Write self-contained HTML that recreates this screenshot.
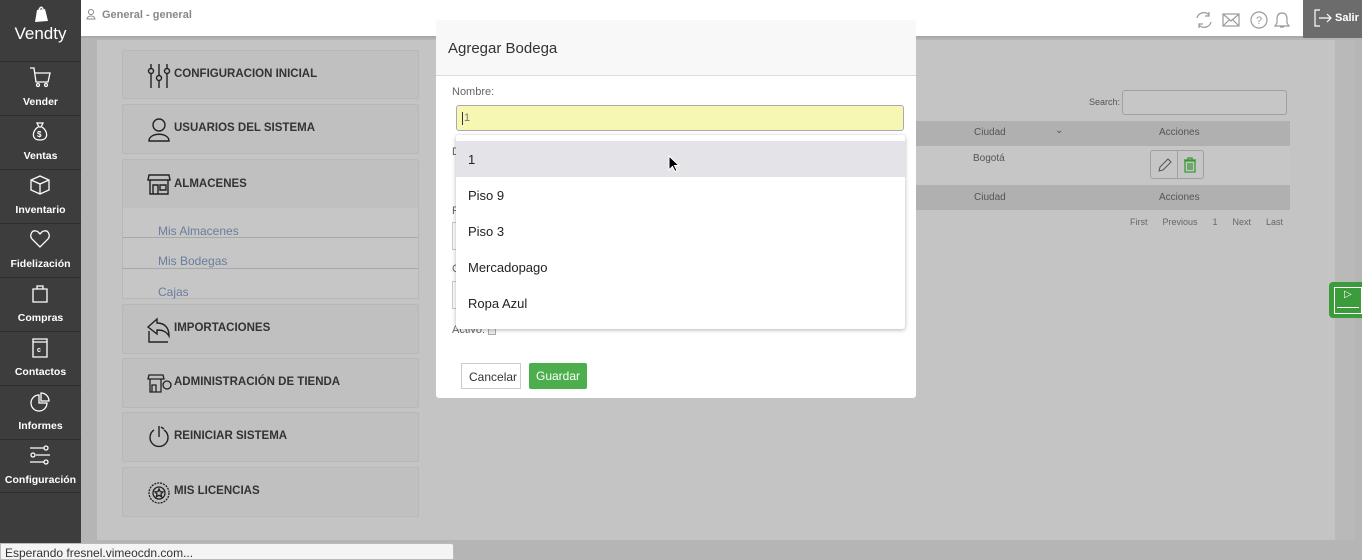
<!DOCTYPE html>
<html><head><meta charset="utf-8"><style>
*{box-sizing:border-box;margin:0;padding:0}
body{width:1362px;height:560px;overflow:hidden;font-family:"Liberation Sans",sans-serif;background:#b5b5b5;position:relative}
.abs{position:absolute}
#side{left:0;top:0;width:81px;height:560px;background:#3d3d3d}
.nav{position:absolute;left:0;width:81px;height:54px;border-top:1px solid #2e2e2e;color:#fff;font-size:10.5px;font-weight:bold;text-align:center}
.nav svg{position:absolute;left:29px;top:4px}
.nav span{position:absolute;left:0;right:0;top:34px}
#hdr{left:81px;top:0;width:1222px;height:38px;background:#fff;border-bottom:2px solid #a8a8a8}
#panel{left:97px;top:40px;width:1238px;height:500px;background:#c4c4c4}
.card{position:absolute;left:122px;width:297px;background:#c0c0c0;border:1px solid #b8b8b8;border-radius:2px;font-size:11.5px;font-weight:bold;color:#333}
.card b{position:absolute;left:51px;top:17px}
.card svg{position:absolute;left:24px;top:12px}
.sub{position:absolute;left:158px;font-size:12px;color:#6a7d9c}
#modal{left:436px;top:20px;width:480px;height:378px;background:#fff;border-radius:3px}
.item{position:absolute;left:0;width:449px;height:36px;font-size:13px;color:#222;padding:11px 12px}
.th{position:absolute;font-size:10px;color:#555}
</style></head><body>
<div id="side" class="abs">
 <svg class="abs" style="left:33px;top:5px" width="16" height="18" viewBox="0 0 16 18"><path d="M4 5 L12 4 L15 16 L2 17 Z" fill="#fff"/><path d="M6 5 Q8 0 10 4" stroke="#fff" fill="none" stroke-width="1.5"/></svg>
 <div class="abs" style="left:0;width:81px;top:24px;text-align:center;color:#fff;font-size:17px">Vendty</div>
 <div class="nav" style="top:61px"><svg width="22" height="24" viewBox="0 0 22 24" fill="none" stroke="#fff" stroke-width="1.3"><path d="M1 2h4l2 14h12l2-9H6"/><circle cx="9" cy="19" r="1.5"/><circle cx="17" cy="19" r="1.5"/></svg><span>Vender</span></div>
 <div class="nav" style="top:115px"><svg width="22" height="24" viewBox="0 0 22 24" fill="none" stroke="#fff" stroke-width="1.3"><path d="M8 3h6l-2 4h-2zM9 7C3 11 2 20 11 20S19 11 13 7"/><text x="8" y="17" font-size="8" fill="#fff" stroke="none">$</text></svg><span>Ventas</span></div>
 <div class="nav" style="top:169px"><svg width="22" height="24" viewBox="0 0 22 24" fill="none" stroke="#fff" stroke-width="1.3"><path d="M11 2l9 4v10l-9 4-9-4V6zM2 6l9 4 9-4M11 10v10"/></svg><span>Inventario</span></div>
 <div class="nav" style="top:223px"><svg width="22" height="24" viewBox="0 0 22 24" fill="none" stroke="#fff" stroke-width="1.3"><path d="M11 19L3 11C0 7 3 2 7 3c2 0 3 2 4 3 1-1 2-3 4-3 4-1 7 4 4 8z"/></svg><span>Fidelización</span></div>
 <div class="nav" style="top:277px"><svg width="22" height="24" viewBox="0 0 22 24" fill="none" stroke="#fff" stroke-width="1.3"><path d="M4 7h14v13H4zM8 7V4h6v3"/></svg><span>Compras</span></div>
 <div class="nav" style="top:331px"><svg width="22" height="24" viewBox="0 0 22 24" fill="none" stroke="#fff" stroke-width="1.3"><path d="M4 3h14v18H4zM4 6h14"/><text x="8" y="16" font-size="7" fill="#fff" stroke="none">c</text></svg><span>Contactos</span></div>
 <div class="nav" style="top:385px"><svg width="22" height="24" viewBox="0 0 22 24" fill="none" stroke="#fff" stroke-width="1.3"><path d="M10 5a8 8 0 1 0 8 8h-8z M12 3v8h8a8 8 0 0 0-8-8z"/></svg><span>Informes</span></div>
 <div class="nav" style="top:439px;border-bottom:1px solid #2e2e2e"><svg width="22" height="24" viewBox="0 0 22 24" fill="none" stroke="#fff" stroke-width="1.3"><path d="M1 4h14M7 11h14M1 18h14"/><circle cx="17" cy="4" r="2"/><circle cx="4" cy="11" r="2"/><circle cx="17" cy="18" r="2"/></svg><span>Configuración</span></div>
</div>
<div id="hdr" class="abs">
 <svg class="abs" style="left:5px;top:9px" width="10" height="11" viewBox="0 0 10 11" fill="none" stroke="#888"><circle cx="5" cy="3" r="2.5"/><path d="M1 10c0-4 8-4 8 0z"/></svg>
 <div class="abs" style="left:21px;top:9px;font-size:11px;font-weight:bold;color:#888">General - general</div>
 <svg class="abs" style="left:1113px;top:10px" width="100" height="20" viewBox="0 0 100 20" fill="none" stroke="#999" stroke-width="1.2"><path d="M3 8a7 7 0 0 1 12-3M17 12a7 7 0 0 1-12 3M15 2v4h-4M5 18v-4h4"/><rect x="29" y="4" width="16" height="12"/><path d="M29 4l8 7 8-7M29 16l6-6M45 16l-6-6"/><circle cx="65" cy="10" r="8"/><text x="62" y="14" font-size="11" fill="#999" stroke="none">?</text><path d="M88 3c-4 0-5 3-5 6v4l-2 3h14l-2-3V9c0-3-1-6-5-6zM86 17h4"/></svg>
</div>
<div class="abs" style="left:1303px;top:0;width:59px;height:38px;background:#6c6c6c;color:#fff;font-size:11px;font-weight:bold"><svg class="abs" style="left:10px;top:9px" width="20" height="18" viewBox="0 0 20 18" fill="none" stroke="#fff" stroke-width="1.2"><path d="M7 1H2v16h5M6 9h12M14 5l4 4-4 4"/></svg><span class="abs" style="left:32px;top:12px">Salir</span></div>
<div id="panel" class="abs"></div>
<div class="abs" style="left:1335px;top:40px;width:20px;height:500px;background:#b9b9b9"></div>

<div class="card" style="top:50px;height:49px"><svg width="24" height="26" viewBox="0 0 24 26" fill="none" stroke="#222" stroke-width="1.4"><path d="M4 1v24M12 1v24M20 1v24"/><circle cx="4" cy="8" r="2.5" fill="#c0c0c0"/><circle cx="12" cy="15" r="2.5" fill="#c0c0c0"/><circle cx="20" cy="8" r="2.5" fill="#c0c0c0"/></svg><b>CONFIGURACION INICIAL</b></div>
<div class="card" style="top:104px;height:50px"><svg width="24" height="26" viewBox="0 0 24 26" fill="none" stroke="#222" stroke-width="1.4"><circle cx="12" cy="8" r="6"/><path d="M2 24c0-9 20-9 20 0z"/></svg><b>USUARIOS DEL SISTEMA</b></div>
<div class="card" style="top:159px;height:140px"><div class="abs" style="left:0;top:48px;width:295px;height:90px;background:#c6c6c6"></div><div class="abs" style="left:0;top:77px;width:295px;border-top:1px solid #a8a8a8"></div><div class="abs" style="left:0;top:108px;width:295px;border-top:1px solid #a8a8a8"></div><svg width="24" height="26" viewBox="0 0 24 26" fill="none" stroke="#222" stroke-width="1.4"><path d="M2 3h20l1 5H1zM3 8v14h18V8M6 22v-9h5v9M13 13h6v5h-6z"/></svg><b style="top:18px">ALMACENES</b></div>
<div class="sub" style="top:224px">Mis Almacenes</div>
<div class="sub" style="top:254px">Mis Bodegas</div>
<div class="sub" style="top:285px">Cajas</div>
<div class="card" style="top:304px;height:50px"><svg width="24" height="26" viewBox="0 0 24 26" fill="none" stroke="#222" stroke-width="1.4"><path d="M1 10l9-8v4c8 0 12 5 12 13-3-5-7-6-12-6v4zM2 14v11h19"/></svg><b>IMPORTACIONES</b></div>
<div class="card" style="top:358px;height:50px"><svg width="26" height="26" viewBox="0 0 26 26" fill="none" stroke="#222" stroke-width="1.3"><path d="M2 4h14l1 4H1zM3 8v13h11V8M5 21v-7h4v7"/><circle cx="20" cy="14" r="4"/></svg><b>ADMINISTRACIÓN DE TIENDA</b></div>
<div class="card" style="top:412px;height:50px"><svg width="24" height="26" viewBox="0 0 24 26" fill="none" stroke="#222" stroke-width="1.4"><path d="M7 5a9 9 0 1 0 10 0M12 1v11M14 2l3 2"/></svg><b>REINICIAR SISTEMA</b></div>
<div class="card" style="top:467px;height:50px"><svg width="24" height="26" viewBox="0 0 24 26" fill="none" stroke="#222" stroke-width="1.3"><circle cx="12" cy="13" r="10" stroke-dasharray="2 1"/><circle cx="12" cy="13" r="6"/><path d="M12 9l1.2 2.6 2.8.3-2 2 .6 2.8-2.6-1.4-2.6 1.4.6-2.8-2-2 2.8-.3z"/></svg><b>MIS LICENCIAS</b></div>

<div class="th" style="left:1089px;top:97px;font-size:9px">Search:</div>
<div class="abs" style="left:1122px;top:90px;width:165px;height:25px;border:1px solid #a0a0a0;border-radius:3px;background:#c6c6c6"></div>
<div class="abs" style="left:916px;top:121px;width:374px;height:25px;background:#b0b0b0"></div>
<div class="abs" style="left:916px;top:146px;width:374px;height:39px;background:#c6c6c6"></div>
<div class="abs" style="left:916px;top:185px;width:374px;height:25px;background:#b0b0b0"></div>
<div class="th" style="left:974px;top:127px">Ciudad</div>
<div class="th" style="left:1055px;top:125px">&#8964;</div>
<div class="th" style="left:1159px;top:127px">Acciones</div>
<div class="th" style="left:973px;top:153px">Bogotá</div>
<div class="th" style="left:974px;top:192px">Ciudad</div>
<div class="th" style="left:1159px;top:192px">Acciones</div>
<div class="abs" style="left:1150px;top:150px;width:54px;height:29px;border:1px solid #a0a0a0;border-radius:3px"><div class="abs" style="left:26px;top:0;height:27px;border-left:1px solid #a0a0a0"></div>
<svg class="abs" style="left:6px;top:6px" width="16" height="16" viewBox="0 0 16 16" fill="none" stroke="#555"><path d="M2 14l1-4 8-8 3 3-8 8z"/></svg>
<svg class="abs" style="left:31px;top:6px" width="16" height="16" viewBox="0 0 16 16" fill="none" stroke="#3a9a3a" stroke-width="1.3"><path d="M2 3h12M6 3V1h4v2M3 4h10v11H3zM6 6v7M8 6v7M10 6v7"/></svg></div>
<div class="th" style="left:1130px;top:217px;font-size:9px;color:#666;word-spacing:0">First&nbsp;&nbsp;&nbsp;&nbsp;&nbsp;&nbsp;Previous&nbsp;&nbsp;&nbsp;&nbsp;&nbsp;&nbsp;1&nbsp;&nbsp;&nbsp;&nbsp;&nbsp;&nbsp;Next&nbsp;&nbsp;&nbsp;&nbsp;&nbsp;&nbsp;Last</div>
<div class="abs" style="left:1329px;top:282px;width:33px;height:36px;background:#3c9c3c;border-radius:4px 0 0 4px"><div class="abs" style="left:5px;top:5px;width:28px;height:27px;border:1px solid #fff"></div><div class="abs" style="left:15px;top:7px;color:#fff;font-size:10px">▷</div><div class="abs" style="left:8px;top:25px;width:22px;border-top:1px solid #fff"></div></div>

<div id="modal" class="abs">
 <div class="abs" style="left:0;top:0;width:480px;height:56px;border-bottom:1px solid #ddd;background:#f8f8f8;border-radius:3px 3px 0 0"></div>
 <div class="abs" style="left:12px;top:20px;font-size:15px;color:#333">Agregar Bodega</div>
 <div class="abs" style="left:16px;top:66px;font-size:11px;color:#666">Nombre:</div>
 <div class="abs" style="left:20px;top:85px;width:448px;height:26px;background:#f7f7b4;border:1px solid #aaa;border-radius:3px"><div class="abs" style="left:5px;top:6px;height:13px;border-left:1px solid #333"></div><span class="abs" style="left:7px;top:6px;font-size:11px;color:#777">1</span></div>
 <div class="abs" style="left:16px;top:126px;font-size:11px;color:#666">D</div>
 <div class="abs" style="left:16px;top:185px;font-size:11px;color:#666">F</div>
 <div class="abs" style="left:16px;top:202px;width:6px;height:28px;border:1px solid #ccc;border-right:0"></div>
 <div class="abs" style="left:16px;top:243px;font-size:11px;color:#666">C</div>
 <div class="abs" style="left:16px;top:261px;width:6px;height:28px;border:1px solid #ccc;border-right:0"></div>
 <div class="abs" style="left:16px;top:304px;font-size:11px;color:#666">Activo:</div>
 <div class="abs" style="left:52px;top:307px;width:8px;height:8px;border:1px solid #aaa;background:#eee"></div>
 <div class="abs" style="left:25px;top:343px;width:60px;height:26px;border:1px solid #ccc;font-size:12px;color:#333;padding:6px 0 0 7px">Cancelar</div>
 <div class="abs" style="left:93px;top:343px;width:58px;height:26px;background:#4cae4c;font-size:12px;color:#fff;padding:6px 0 0 7px;border-radius:2px">Guardar</div>
 <div class="abs" style="left:20px;top:115px;width:449px;height:194px;background:#fff;border-radius:3px;box-shadow:0 1px 4px rgba(0,0,0,.3)">
  <div class="item" style="top:6px;background:#e4e4e8">1</div>
  <div class="item" style="top:42px">Piso 9</div>
  <div class="item" style="top:78px">Piso 3</div>
  <div class="item" style="top:114px">Mercadopago</div>
  <div class="item" style="top:150px">Ropa Azul</div>
 </div>
 <svg class="abs" style="left:232px;top:135px" width="12" height="18" viewBox="0 0 12 18"><path d="M1 1v14l3.5-3.5 2.5 5 2-1-2.5-5H11z" fill="#000" stroke="#fff" stroke-width="1"/></svg>
</div>
<div class="abs" style="left:0;top:543px;width:454px;height:17px;background:#f4f4f4;border:1px solid #bbb;border-radius:0 3px 0 0;font-size:12px;color:#333;padding:2px 4px">Esperando fresnel.vimeocdn.com...</div>
</body></html>
